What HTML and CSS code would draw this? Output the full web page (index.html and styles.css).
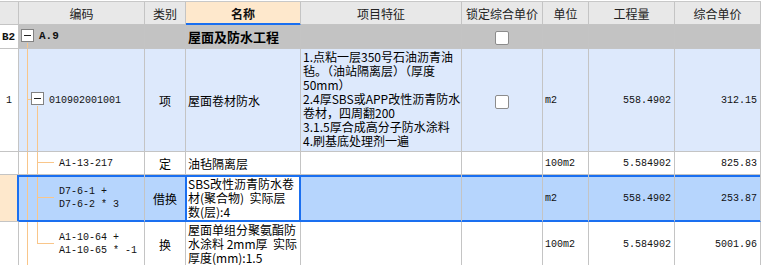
FILE: index.html
```html
<!DOCTYPE html>
<html lang="zh-CN">
<head>
    <meta charset="UTF-8">
    <title>清单定额</title>
    <link rel="stylesheet" href="styles.css">
</head>
<body>
    <table class="grid">
        <colgroup>
            <col class="c-no">
            <col class="c-code">
            <col class="c-type">
            <col class="c-name">
            <col class="c-spec">
            <col class="c-lock">
            <col class="c-unit">
            <col class="c-qty">
            <col class="c-price">
        </colgroup>
        <thead>
            <tr>
                <th></th>
                <th>编码</th>
                <th>类别</th>
                <th class="th-active">名称</th>
                <th>项目特征</th>
                <th>锁定综合单价</th>
                <th>单位</th>
                <th>工程量</th>
                <th>综合单价</th>
            </tr>
        </thead>
        <tbody>
            <tr class="r-group">
                <td class="no mono">B2</td>
                <td class="code mono"><span class="toggle"></span>A.9</td>
                <td></td>
                <td class="name">屋面及防水工程</td>
                <td></td>
                <td class="center"><span class="check"></span></td>
                <td></td>
                <td></td>
                <td></td>
            </tr>
            <tr class="r-item">
                <td class="no mono">1</td>
                <td class="code mono"><span class="toggle"></span>010902001001</td>
                <td class="center">项</td>
                <td class="name">屋面卷材防水</td>
                <td class="spec">1.点粘一层350号石油沥青油<br>毡。（油站隔离层）（厚度<br>50mm）<br>2.4厚SBS或APP改性沥青防水<br>卷材，四周翻200<br>3.1.5厚合成高分子防水涂料<br>4.刷基底处理剂一遍</td>
                <td class="center"><span class="check"></span></td>
                <td class="unit mono">m2</td>
                <td class="num mono">558.4902</td>
                <td class="num mono">312.15</td>
            </tr>
            <tr class="r-child r-sub1">
                <td class="no"></td>
                <td class="code mono">A1-13-217</td>
                <td class="center">定</td>
                <td class="name">油毡隔离层</td>
                <td></td>
                <td></td>
                <td class="unit mono">100m2</td>
                <td class="num mono">5.584902</td>
                <td class="num mono">825.83</td>
            </tr>
            <tr class="r-child r-sel">
                <td class="no"></td>
                <td class="code mono">D7-6-1 +<br>D7-6-2 * 3</td>
                <td class="center type-edge">借换</td>
                <td class="name multi current">SBS改性沥青防水卷<br>材(聚合物)&nbsp;&nbsp;实际层<br>数(层):4</td>
                <td></td>
                <td></td>
                <td class="unit mono">m2</td>
                <td class="num mono">558.4902</td>
                <td class="num mono">253.87</td>
            </tr>
            <tr class="r-child r-last">
                <td class="no"></td>
                <td class="code mono">A1-10-64 +<br>A1-10-65 * -1</td>
                <td class="center">换</td>
                <td class="name multi">屋面单组分聚氨酯防<br>水涂料 2mm厚&nbsp;&nbsp;实际<br>厚度(mm):1.5</td>
                <td></td>
                <td></td>
                <td class="unit mono">100m2</td>
                <td class="num mono">5.584902</td>
                <td class="num mono">5001.96</td>
            </tr>
        </tbody>
    </table>
</body>
</html>
```

FILE: styles.css
```css
body {
    margin: 0;
    background: #fff;
    font-family: "Noto Sans CJK SC", sans-serif;
    font-size: 12px;
    color: #000;
}

.grid {
    border-collapse: separate;
    border-spacing: 0;
    table-layout: fixed;
    width: 761px;
    margin-top: 1px;
    border-top: 1px solid #c8c8c8;
}

.c-no { width: 19px; }
.c-code { width: 126px; }
.c-type { width: 41px; }
.c-name { width: 115px; }
.c-spec { width: 161px; }
.c-lock { width: 81px; }
.c-unit { width: 46px; }
.c-qty { width: 86px; }
.c-price { width: 86px; }

.grid th,
.grid td {
    box-sizing: border-box;
    padding: 0;
    border-right: 1px solid #c4c4c4;
    border-bottom: 1px solid #c4c4c4;
    overflow: hidden;
    white-space: nowrap;
    vertical-align: middle;
}

.grid th {
    height: 23px;
    background: #e8e8e8;
    color: #222;
    font-weight: normal;
    text-align: center;
}

.grid th.th-active {
    background: #fee8cc;
    font-weight: bold;
    color: #111;
    border-bottom-color: #1a6ff0;
    box-shadow: inset 0 -1px #1a6ff0;
}

.mono {
    font-family: "Liberation Mono", monospace;
    font-size: 10px;
    color: #111;
}

.no {
    text-align: center;
    background: #fff;
}

.center { text-align: center; }
.name { padding-left: 2px !important; }
.unit { padding-left: 2px !important; }
.num {
    text-align: right;
    padding-right: 3px !important;
}

.spec {
    vertical-align: top !important;
    padding: 1px 0 0 2px !important;
    line-height: 14px;
}

.multi { line-height: 14px; }
.code { line-height: 13px; }

/* tree toggles */
.toggle {
    display: inline-block;
    box-sizing: border-box;
    width: 13px;
    height: 13px;
    border: 1px solid #828282;
    background: #fff;
    vertical-align: middle;
    margin: -2px 5px 0 0;
    position: relative;
}

.toggle::after {
    content: "";
    position: absolute;
    left: 2px;
    top: 5px;
    width: 7px;
    height: 1px;
    background: #222;
}

.check {
    display: inline-block;
    box-sizing: border-box;
    width: 14px;
    height: 14px;
    border: 1px solid #8c8c8c;
    border-radius: 2px;
    background: #fff;
    vertical-align: middle;
}

/* rows */
.r-group td {
    height: 24px;
    background: #c3c3c3;
    font-weight: bold;
}

.r-group .code {
    padding-left: 2px;
    font-size: 11px;
    background: linear-gradient(#f9c68a, #f9c68a) 8px 18px / 1px 100% no-repeat, #c3c3c3;
}

.r-group .no {
    background: #fff;
    font-size: 11px;
    text-align: left;
    padding-left: 2px;
}

.r-group .name { font-size: 13px; }

.r-item td {
    height: 103px;
    background: #dde9fc;
}

.r-item .no { background: #fff; }

.r-item .code {
    padding-left: 12px;
    background:
        linear-gradient(#f9c68a, #f9c68a) 8px 0 / 1px 100% no-repeat,
        linear-gradient(#f9c68a, #f9c68a) 9px 50px / 3px 1px no-repeat,
        linear-gradient(#f9c68a, #f9c68a) 18px 57px / 1px 100% no-repeat,
        #dde9fc;
}

.r-child .code { padding-left: 40px; }

.r-sub1 td { height: 23px; }

.r-sub1 .code {
    background:
        linear-gradient(#f9c68a, #f9c68a) 8px 0 / 1px 100% no-repeat,
        linear-gradient(#f9c68a, #f9c68a) 18px 0 / 1px 100% no-repeat,
        linear-gradient(#f9c68a, #f9c68a) 18px 10px / 17px 1px no-repeat;
}

.r-sel td {
    height: 47px;
    background: #b6d5fd;
    border-bottom-color: #1a6ff0;
    box-shadow: inset 0 2px #1a6ff0, inset 0 -1px #1a6ff0;
}

.r-sel .no {
    background: #fee8cc;
    border-bottom-color: #c4c4c4;
    border-right-color: #1a6ff0;
    box-shadow: inset -1px 0 #1a6ff0;
}

.r-sel .code {
    background:
        linear-gradient(#f9c68a, #f9c68a) 8px 0 / 1px 100% no-repeat,
        linear-gradient(#f9c68a, #f9c68a) 18px 0 / 1px 100% no-repeat,
        linear-gradient(#f9c68a, #f9c68a) 18px 22px / 17px 1px no-repeat,
        #b6d5fd;
}

.r-sel .type-edge { border-right-color: #1a6ff0; }

.r-sel .current {
    background: #fff;
    border-right-color: #1a6ff0;
    box-shadow: inset 1px 2px #1a6ff0, inset -1px -1px #1a6ff0;
}

.r-last td { height: 45px; }

.r-last .code {
    background:
        linear-gradient(#f9c68a, #f9c68a) 8px 0 / 1px 100% no-repeat,
        linear-gradient(#f9c68a, #f9c68a) 18px 0 / 1px 21px no-repeat,
        linear-gradient(#f9c68a, #f9c68a) 18px 21px / 17px 1px no-repeat;
}
```
